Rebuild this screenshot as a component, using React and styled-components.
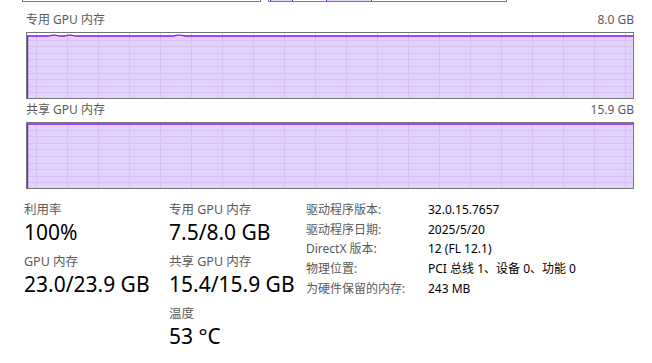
import React from "react";
import styled, { createGlobalStyle } from "styled-components";

const Global = createGlobalStyle`
  html, body { margin: 0; padding: 0; background: #fff; }
  body {
    font-family: "Noto Sans", "Noto Sans CJK SC", sans-serif;
    color: #000;
    width: 652px;
    height: 363px;
    overflow: hidden;
  }
`;

const LINE = "#8514f4";
const FILL = "#e3d1fe";
const GRID_IN = "#d5c2ef";
const GRID_OUT = "#d8d8d8";

const Page = styled.div`
  display: flex;
  flex-direction: column;
`;

const TopStrip = styled.div`
  display: flex;
  gap: 7px;
  padding-left: 22px;
  height: 2px;
`;

const MiniChart = styled.div`
  width: 239px;
  height: 2px;
  box-sizing: border-box;
  border: 1px solid #7a7a7a;
  border-top: none;
  overflow: hidden;
`;

const ChartSection = styled.div`
  display: flex;
  flex-direction: column;
  padding: 0 18px 0 26px;
  margin-top: ${(p) => p.$top}px;
`;

const ChartHeader = styled.div`
  display: flex;
  justify-content: space-between;
  font-size: 12px;
  line-height: 16px;
  color: #5a5a5a;
  margin-bottom: 4px;
`;

const ChartBox = styled.div`
  height: 67px;
  box-sizing: border-box;
  border: 1px solid #767676;
  display: flex;
`;

const Stats = styled.div`
  display: grid;
  grid-template-columns: 145px 137px 122px auto;
  padding-left: 24px;
  margin-top: 13px;
`;

const StatCol = styled.div`
  display: flex;
  flex-direction: column;
  gap: 7px;
`;

const Stat = styled.div`
  display: flex;
  flex-direction: column;
`;

const StatLabel = styled.div`
  font-size: 12.5px;
  line-height: 16px;
  color: #5a5a5a;
`;

const StatValue = styled.div`
  font-size: 21px;
  line-height: 29px;
  color: #000;
`;

const InfoCol = styled.div`
  display: flex;
  flex-direction: column;
  font-size: 12px;
  line-height: 19.7px;
  margin-top: -2px;
  color: ${(p) => (p.$dim ? "#5a5a5a" : "#000")};
`;

function Chart({ lineY, bumps = [] }) {
  const w = 607;
  const h = 65;
  const verts = [];
  for (let x = 9; x < w; x += 31) verts.push(x);
  const hors = [];
  for (let k = 1; k < 10; k++) hors.push(k * 6.6);
  let d = `M0 ${lineY}`;
  bumps.forEach(([a, b]) => {
    const m = (a + b) / 2;
    d += ` L${a} ${lineY} Q${m} ${lineY - 1.6} ${b} ${lineY}`;
  });
  d += ` L${w} ${lineY}`;
  const fillD = `${d} L${w} ${h} L0 ${h} Z`;
  return (
    <svg width={w} height={h} style={{ display: "block" }}>
      {verts.map((x) => (
        <line key={"o" + x} x1={x + 0.5} x2={x + 0.5} y1={0} y2={lineY} stroke={GRID_OUT} strokeWidth="1" />
      ))}
      <path d={fillD} fill={FILL} />
      {hors.map((y) =>
        y > lineY + 1 ? (
          <line key={"h" + y} x1={0} x2={w} y1={Math.round(y) + 0.5} y2={Math.round(y) + 0.5} stroke={GRID_IN} strokeWidth="1" />
        ) : null
      )}
      {verts.map((x) => (
        <line key={"v" + x} x1={x + 0.5} x2={x + 0.5} y1={lineY} y2={h} stroke={GRID_IN} strokeWidth="1" />
      ))}
      <path d={d} fill="none" stroke={LINE} strokeWidth="1.3" />
      <line x1={0.5} x2={0.5} y1={lineY} y2={h} stroke={LINE} strokeWidth="1.4" />
    </svg>
  );
}

function Mini({ segments }) {
  return (
    <MiniChart>
      <svg width="237" height="1" style={{ display: "block" }}>
        {segments.map(([a, b], i) => (
          <g key={i}>
            <rect x={a} y={0} width={b - a} height={1} fill={FILL} />
            <rect x={a} y={0} width={1} height={1} fill={LINE} />
            <rect x={b - 1} y={0} width={1} height={1} fill={LINE} />
          </g>
        ))}
      </svg>
    </MiniChart>
  );
}

const stats1 = [
  { label: "利用率", value: "100%" },
  { label: "GPU 内存", value: "23.0/23.9 GB" },
];
const stats2 = [
  { label: "专用 GPU 内存", value: "7.5/8.0 GB" },
  { label: "共享 GPU 内存", value: "15.4/15.9 GB" },
  { label: "温度", value: "53 °C" },
];
const info = [
  ["驱动程序版本:", "32.0.15.7657"],
  ["驱动程序日期:", "2025/5/20"],
  ["DirectX 版本:", "12 (FL 12.1)"],
  ["物理位置:", "PCI 总线 1、设备 0、功能 0"],
  ["为硬件保留的内存:", "243 MB"],
];

export default function App() {
  return (
    <>
      <Global />
      <Page>
        <TopStrip>
          <Mini segments={[]} />
          <Mini segments={[[1, 24], [57, 103]]} />
        </TopStrip>
        <ChartSection $top={10}>
          <ChartHeader>
            <span>专用 GPU 内存</span>
            <span>8.0 GB</span>
          </ChartHeader>
          <ChartBox>
            <Chart lineY={3} bumps={[[22, 32], [38, 48], [146, 158]]} />
          </ChartBox>
        </ChartSection>
        <ChartSection $top={3}>
          <ChartHeader>
            <span>共享 GPU 内存</span>
            <span>15.9 GB</span>
          </ChartHeader>
          <ChartBox>
            <Chart lineY={1} />
          </ChartBox>
        </ChartSection>
        <Stats>
          <StatCol>
            {stats1.map((s) => (
              <Stat key={s.label}>
                <StatLabel>{s.label}</StatLabel>
                <StatValue>{s.value}</StatValue>
              </Stat>
            ))}
          </StatCol>
          <StatCol>
            {stats2.map((s) => (
              <Stat key={s.label}>
                <StatLabel>{s.label}</StatLabel>
                <StatValue>{s.value}</StatValue>
              </Stat>
            ))}
          </StatCol>
          <InfoCol $dim>
            {info.map(([k]) => (
              <span key={k}>{k}</span>
            ))}
          </InfoCol>
          <InfoCol>
            {info.map(([k, v]) => (
              <span key={k}>{v}</span>
            ))}
          </InfoCol>
        </Stats>
      </Page>
    </>
  );
}
